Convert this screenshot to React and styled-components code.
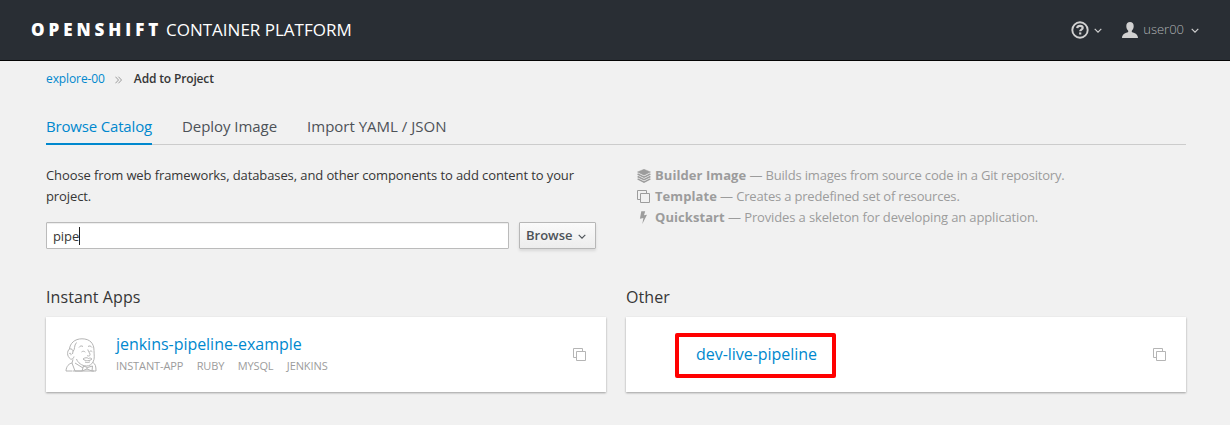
import React from "react";
import styled, { createGlobalStyle } from "styled-components";

const Global = createGlobalStyle`
  * { box-sizing: border-box; }
  body {
    margin: 0;
    background: #f1f1f1;
    color: #363636;
    font-family: "Open Sans", "Noto Sans", sans-serif;
    font-size: 13px;
    line-height: 21px;
  }
`;

const Page = styled.div`
  height: 425px;
  overflow: hidden;
`;

const Masthead = styled.header`
  display: flex;
  align-items: center;
  justify-content: space-between;
  height: 61px;
  padding: 0 31px;
  background: #292e34;
  border-bottom: 1px solid #050505;
`;

const Brand = styled.div`
  display: flex;
  align-items: baseline;
  color: #fff;
  font-size: 17px;
  line-height: 24px;
  white-space: nowrap;
`;

const BrandStrong = styled.span`
  width: 135px;
  font-weight: 800;
  letter-spacing: 3.95px;
`;

const BrandLight = styled.span`
  font-weight: 400;
`;

const Utilities = styled.nav`
  display: flex;
  align-items: center;
  color: #d1d1d1;
  gap: 20px;
`;

const Utility = styled.div`
  display: flex;
  align-items: center;
  gap: 5px;
`;

const UserName = styled.span`
  color: #b0b3b5;
  font-weight: 300;
  margin: -2px 2px 0 0;
`;

const Main = styled.main`
  padding: 7px 44px 0 46px;
`;

const Breadcrumb = styled.div`
  display: flex;
  align-items: center;
  font-size: 12px;
  height: 21px;
`;

const Link = styled.a`
  color: #0088ce;
  letter-spacing: -0.1px;
`;

const Separator = styled.span`
  display: flex;
  margin: 2px 12px 0 10px;
`;

const Current = styled.span`
  font-weight: 600;
  letter-spacing: -0.15px;
`;

const Tabs = styled.div`
  display: flex;
  gap: 30px;
  margin-top: 23px;
  height: 33px;
  border-bottom: 1px solid #ccc;
  font-size: 15px;
  line-height: 29px;
`;

const Tab = styled.div`
  height: 33px;
  color: ${(p) => (p.$active ? "#0088ce" : "#4d5258")};
  border-bottom: 2px solid ${(p) => (p.$active ? "#0088ce" : "transparent")};
  letter-spacing: ${(p) => p.$tracking};
`;

const Intro = styled.section`
  display: grid;
  grid-template-columns: 550px 1fr;
  column-gap: 41px;
  padding-top: 20px;
  height: 141px;
`;

const Description = styled.p`
  margin: 0 0 15px;
  letter-spacing: -0.1px;
`;

const SearchRow = styled.div`
  display: flex;
  gap: 10px;
`;

const SearchField = styled.div`
  display: flex;
  align-items: center;
  width: 463px;
  height: 27px;
  padding: 1px 6px 0;
  background: #fff;
  border: 1px solid #bbb;
  border-radius: 1px;
  box-shadow: inset 0 1px 1px rgba(3, 3, 3, 0.075);
  letter-spacing: -0.1px;
`;

const Caret = styled.span`
  width: 1px;
  height: 18px;
  background: #222;
`;

const Button = styled.div`
  display: flex;
  align-items: center;
  justify-content: space-between;
  width: 77px;
  height: 27px;
  padding: 0 9px 0 6px;
  color: #4d5258;
  font-weight: 600;
  background: linear-gradient(#fafafa, #ededed);
  border: 1px solid #b7b7b7;
  border-radius: 1px;
  box-shadow: 0 2px 3px rgba(3, 3, 3, 0.1);
`;

const Legend = styled.div`
  color: #9c9c9c;
`;

const LegendItem = styled.div`
  display: flex;
  align-items: center;
  white-space: pre;
`;

const LegendIcon = styled.span`
  display: flex;
  width: 18px;
`;

const LegendName = styled.b`
  letter-spacing: 0.07px;
`;

const LegendText = styled.span`
  letter-spacing: ${(p) => p.$tracking};
`;

const Catalog = styled.section`
  display: grid;
  grid-template-columns: 1fr 1fr;
  gap: 20px;
`;

const Heading = styled.h2`
  margin: 0 0 9px;
  font-size: 16px;
  font-weight: 400;
  line-height: 22px;
  letter-spacing: 0.08px;
`;

const Card = styled.article`
  display: flex;
  align-items: center;
  height: 75px;
  padding: 0 20px 0 19px;
  background: #fff;
  box-shadow: 0 1px 2px rgba(3, 3, 3, 0.35);
`;

const CardBody = styled.div`
  flex: 1;
  margin-left: 19px;
`;

const CardTitle = styled.div`
  color: #0088ce;
  font-size: 16px;
  line-height: 22px;
  letter-spacing: -0.03px;
`;

const Tags = styled.div`
  display: flex;
  gap: 13.3px;
  color: #9c9c9c;
  font-size: 11px;
  line-height: 21px;
  letter-spacing: -0.1px;
  text-transform: uppercase;
`;

const Highlight = styled.div`
  display: flex;
  align-items: center;
  justify-content: center;
  width: 161px;
  height: 45px;
  margin: 2px auto 0 30px;
  padding: 0 0 4px 2px;
  border: 4px solid #f00;
  border-radius: 2px;
`;

const Chevron = () => (
  <svg width="8" height="8" viewBox="0 0 8 8" fill="none" stroke="currentColor" strokeWidth="1.15">
    <path d="M.7 2.800 4 6.100 7.300 2.800" />
  </svg>
);

const HelpIcon = () => (
  <svg width="18" height="18" viewBox="0 0 18 18" fill="none" stroke="currentColor">
    <circle cx="9" cy="9" r="7.700" strokeWidth="1.900" />
    <path d="M6.2 7.1C6.4 5.6 7.5 4.900 9 4.900c1.600 0 2.700.800 2.700 2.100 0 1.700-2.500 1.500-2.500 3.200" strokeWidth="2.200" />
    <path d="M9.200 11.400v2.100" strokeWidth="2.200" />
  </svg>
);

const UserIcon = () => (
  <svg width="16" height="16" viewBox="0 0 16 16" fill="currentColor">
    <path d="M8 0C5.800 0 4.300 1.500 4.300 4c0 2 .7 3.700 1.900 4.700v1.400C3.600 11.200.2 12 0 16h16c-.2-4-3.600-4.800-6.200-5.900V8.700c1.200-1 1.900-2.700 1.900-4.700C11.700 1.500 10.200 0 8 0z" />
  </svg>
);

const DoubleAngle = () => (
  <svg width="7" height="8" viewBox="0 0 7 8" fill="none" stroke="#9c9c9c">
    <path d="M.4.700 3.500 4 .4 7.300M3.400.700 6.500 4 3.400 7.300" />
  </svg>
);

const LayersIcon = () => (
  <svg width="14" height="14" viewBox="0 0 14 14">
    <path d="M7 .3 13.500 3 7 6.200.500 3z" fill="#9c9c9c" stroke="#9c9c9c" strokeWidth=".5" />
    <path
      d="M.600 5 7 8.200 13.400 5M.600 7.500 7 10.700l6.400-3.200M.600 9.900 7 13.100l6.400-3.200"
      fill="none"
      stroke="#9c9c9c"
      strokeWidth="1.400"
    />
  </svg>
);

const CopyIcon = ({ color = "#9c9c9c" }) => (
  <svg width="13" height="13" viewBox="0 0 13 13" fill="none" stroke={color}>
    <path d="M3 9.500H.5v-9h9V3" />
    <path d="M3.500 3.500h9v9h-9z" />
  </svg>
);

const BoltIcon = () => (
  <svg width="14" height="13" viewBox="0 0 14 13" fill="#9c9c9c">
    <path d="M4.300.3h3.900L7 4.300l3-.6L5.300 12.900l1.100-6-3.500.8z" />
  </svg>
);

const JenkinsIcon = () => (
  <svg width="32" height="34" viewBox="0 0 32 34" fill="none" stroke="#b4b4b4" strokeWidth="1" strokeLinejoin="round">
    <path d="M5.500 21C1.500 18 2 13 4.500 11 5 5.500 9.500.8 17 .8c8 0 12 4.700 12 11.700 0 5 1 8-1 11.500-1.500 2.500-3.500 4-6.500 4-4.500 0-9-3.500-10-7" />
    <path d="M4.500 11c2-.5 3.500.5 3.500 2.500L7.500 16M8 13.500C10.500 11 8.500 8 11.500 4.500M5.500 21c2 .7 3-.5 3.500-2.500" />
    <path d="M4.200 15.500c1.300-.8 2.300.2 1.700 1.700M14 9.500c1-1.700 2.500-2 4-1M23 8.500c1.500-1 3-.5 4 1" />
    <path d="M16.500 14c1.200-1 2.800-1 3.800.2M24.500 13.500c1-.8 2-.6 2.800.2M22.800 11.500c.5 3 3.200 4 2 6-.6.800-2 .5-2.800 0" />
    <path d="M18 21c2-1.500 4-1.700 5.500-.5 1.300-.8 2.800-.3 3.500.5-2 2-6.500 2.500-9 0zM20 24c1.700.8 3.500.7 5-.2" />
    <path d="M8 21.500 7 25c-3 .7-5.700 3-6 8h6.500M7 25l3 8h7M10 25l8 5M28 24.500c2.500 1.500 3 4 3 8.500h-4" />
    <path d="m18.500 28-1.500 5 5-2 5 2 .500-5-5 1.500zM22 29.500V31M8 33h21" />
  </svg>
);

const legend = [
  {
    icon: <LayersIcon />,
    name: "Builder Image",
    text: "Builds images from source code in a Git repository.",
    tracking: "-0.18px",
  },
  { icon: <CopyIcon />, name: "Template", text: "Creates a predefined set of resources.", tracking: "-0.18px" },
  {
    icon: <BoltIcon />,
    name: "Quickstart",
    text: "Provides a skeleton for developing an application.",
    tracking: "-0.13px",
  },
];

export default function App() {
  return (
    <Page>
      <Global />
      <Masthead>
        <Brand>
          <BrandStrong>OPENSHIFT</BrandStrong>
          <BrandLight>CONTAINER PLATFORM</BrandLight>
        </Brand>
        <Utilities>
          <Utility>
            <HelpIcon />
            <Chevron />
          </Utility>
          <Utility>
            <UserIcon />
            <UserName>user00</UserName>
            <Chevron />
          </Utility>
        </Utilities>
      </Masthead>
      <Main>
        <Breadcrumb>
          <Link>explore-00</Link>
          <Separator>
            <DoubleAngle />
          </Separator>
          <Current>Add to Project</Current>
        </Breadcrumb>
        <Tabs>
          <Tab $active $tracking="-0.17px">
            Browse Catalog
          </Tab>
          <Tab $tracking="-0.05px">Deploy Image</Tab>
          <Tab $tracking="0">Import YAML / JSON</Tab>
        </Tabs>
        <Intro>
          <div>
            <Description>
              Choose from web frameworks, databases, and other components to add content to your project.
            </Description>
            <SearchRow>
              <SearchField>
                pipe
                <Caret />
              </SearchField>
              <Button>
                Browse
                <Chevron />
              </Button>
            </SearchRow>
          </div>
          <Legend>
            {legend.map((item) => (
              <LegendItem key={item.name}>
                <LegendIcon>{item.icon}</LegendIcon>
                <LegendName>{item.name}</LegendName>
                <LegendText $tracking={item.tracking}> — {item.text}</LegendText>
              </LegendItem>
            ))}
          </Legend>
        </Intro>
        <Catalog>
          <div>
            <Heading>Instant Apps</Heading>
            <Card>
              <JenkinsIcon />
              <CardBody>
                <CardTitle>jenkins-pipeline-example</CardTitle>
                <Tags>
                  <span>Instant-App</span>
                  <span>Ruby</span>
                  <span>MySQL</span>
                  <span>Jenkins</span>
                </Tags>
              </CardBody>
              <CopyIcon color="#b5b5b5" />
            </Card>
          </div>
          <div>
            <Heading>Other</Heading>
            <Card>
              <Highlight>
                <CardTitle>dev-live-pipeline</CardTitle>
              </Highlight>
              <CopyIcon color="#b5b5b5" />
            </Card>
          </div>
        </Catalog>
      </Main>
    </Page>
  );
}
